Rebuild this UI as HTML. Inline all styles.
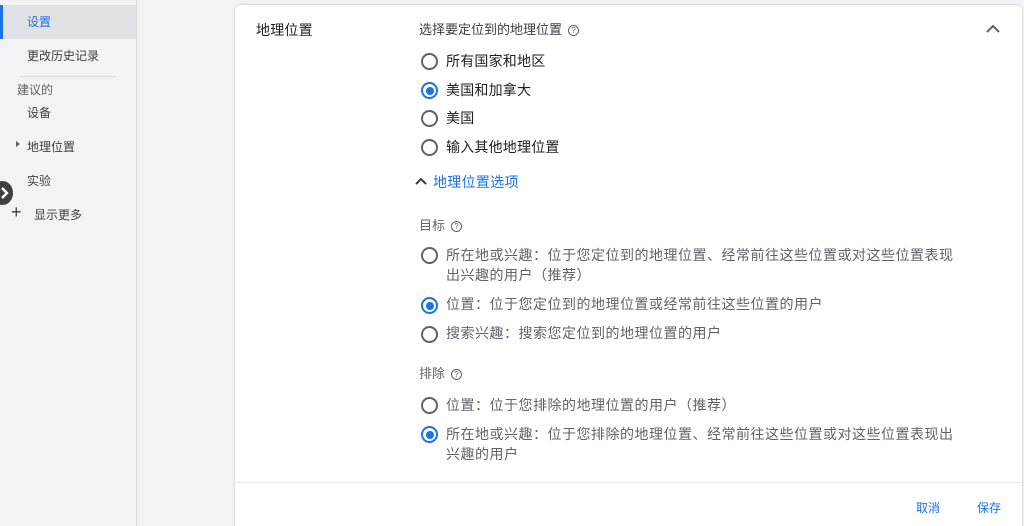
<!DOCTYPE html><html><head><meta charset="utf-8"><style>
*{margin:0;padding:0;box-sizing:border-box}
html,body{width:1024px;height:526px;overflow:hidden}
body{background:#f1f3f4;font-family:"Liberation Sans","Noto Sans CJK SC",sans-serif;position:relative;color:#202124}
.a{position:absolute;white-space:nowrap}
.side{position:absolute;left:0;top:0;width:137px;height:526px;background:#f1f3f4;border-right:1px solid #dadce0}
.sel{position:absolute;left:0;top:5px;width:136px;height:34px;background:#e1e2e5;border-left:3px solid #1a73e8}
.s{font-size:12px;color:#3c4043}
.card{position:absolute;left:235px;top:5px;width:787px;height:530px;background:#fff;border-radius:6px;box-shadow:0 0 2px rgba(60,64,67,.3)}
.r{position:absolute;width:17px;height:17px;border:2px solid #5f6368;border-radius:50%}
.r.on{border-color:#1a73e8}
.r.on::after{content:"";position:absolute;left:2.5px;top:2.5px;width:8px;height:8px;border-radius:50%;background:#1a73e8}
.t{font-size:14px;color:#202124;letter-spacing:0.2px}
.g{font-size:14px;color:#5f6368;line-height:20px;letter-spacing:0.5px}
.q{display:inline-block;width:11px;height:11px;border:1.3px solid #5f6368;border-radius:50%;font-size:8px;line-height:9px;text-align:center;color:#5f6368;vertical-align:1px;margin-left:6px}
</style></head><body>
<div class="side"></div>
<div class="sel"></div>
<div class="a s" style="left:27px;top:13px;color:#1a73e8">设置</div>
<div class="a s" style="left:27px;top:47px">更改历史记录</div>
<div style="position:absolute;left:20px;top:76px;width:96px;height:1px;background:#dadce0"></div>
<div class="a s" style="left:17px;top:81px;color:#5f6368">建议的</div>
<div class="a s" style="left:27px;top:104px">设备</div>
<div class="a" style="left:16px;top:141px;width:0;height:0;border-left:4px solid #5f6368;border-top:3px solid transparent;border-bottom:3px solid transparent"></div>
<div class="a s" style="left:27px;top:138px">地理位置</div>
<div class="a s" style="left:27px;top:172px">实验</div>
<div class="a" style="left:-8px;top:181px;width:21px;height:24px;border-radius:50%;background:#3c4043"></div>
<svg class="a" style="left:0;top:186px" width="12" height="14"><path d="M2 2l5 5-5 5" stroke="#fff" stroke-width="2.5" fill="none"/></svg>
<div class="a" style="left:11px;top:203px;font-size:18px;color:#3c4043;line-height:18px">+</div>
<div class="a s" style="left:34px;top:206px">显示更多</div>

<div class="card"></div>
<div class="a t" style="left:256px;top:20px">地理位置</div>
<svg class="a" style="left:985px;top:23px" width="16" height="12"><path d="M2 9l6-6 6 6" stroke="#5f6368" stroke-width="2" fill="none"/></svg>
<div class="a" style="left:419px;top:19px;font-size:13px;color:#3c4043">选择要定位到的地理位置<span class="q">?</span></div>

<div class="r" style="left:421px;top:53px"></div><div class="a t" style="left:446px;top:51px">所有国家和地区</div>
<div class="r on" style="left:421px;top:82px"></div><div class="a t" style="left:446px;top:80px">美国和加拿大</div>
<div class="r" style="left:421px;top:110px"></div><div class="a t" style="left:446px;top:108px">美国</div>
<div class="r" style="left:421px;top:139px"></div><div class="a t" style="left:446px;top:137px">输入其他地理位置</div>
<svg class="a" style="left:414px;top:176px" width="14" height="10"><path d="M2 8l5-5 5 5" stroke="#3c4043" stroke-width="2" fill="none"/></svg>
<div class="a" style="left:433px;top:172px;font-size:14px;color:#1a73e8;letter-spacing:0.3px">地理位置选项</div>

<div class="a" style="left:419px;top:215px;font-size:13px;color:#5f6368">目标<span class="q">?</span></div>
<div class="r" style="left:421px;top:247px"></div><div class="a g" style="left:446px;top:245px">所在地或兴趣：位于您定位到的地理位置、经常前往这些位置或对这些位置表现<br>出兴趣的用户（推荐）</div>
<div class="r on" style="left:421px;top:297px"></div><div class="a g" style="left:446px;top:294px">位置：位于您定位到的地理位置或经常前往这些位置的用户</div>
<div class="r" style="left:421px;top:326px"></div><div class="a g" style="left:446px;top:323px">搜索兴趣：搜索您定位到的地理位置的用户</div>

<div class="a" style="left:419px;top:363px;font-size:13px;color:#5f6368">排除<span class="q">?</span></div>
<div class="r" style="left:421px;top:397px"></div><div class="a g" style="left:446px;top:395px">位置：位于您排除的地理位置的用户（推荐）</div>
<div class="r on" style="left:421px;top:426px"></div><div class="a g" style="left:446px;top:424px">所在地或兴趣：位于您排除的地理位置、经常前往这些位置或对这些位置表现出<br>兴趣的用户</div>

<div style="position:absolute;left:235px;top:482px;width:787px;height:1px;background:#e8eaed"></div>
<div class="a" style="left:916px;top:499px;font-size:12px;color:#1a73e8">取消</div>
<div class="a" style="left:977px;top:499px;font-size:12px;color:#1a73e8">保存</div>
</body></html>
